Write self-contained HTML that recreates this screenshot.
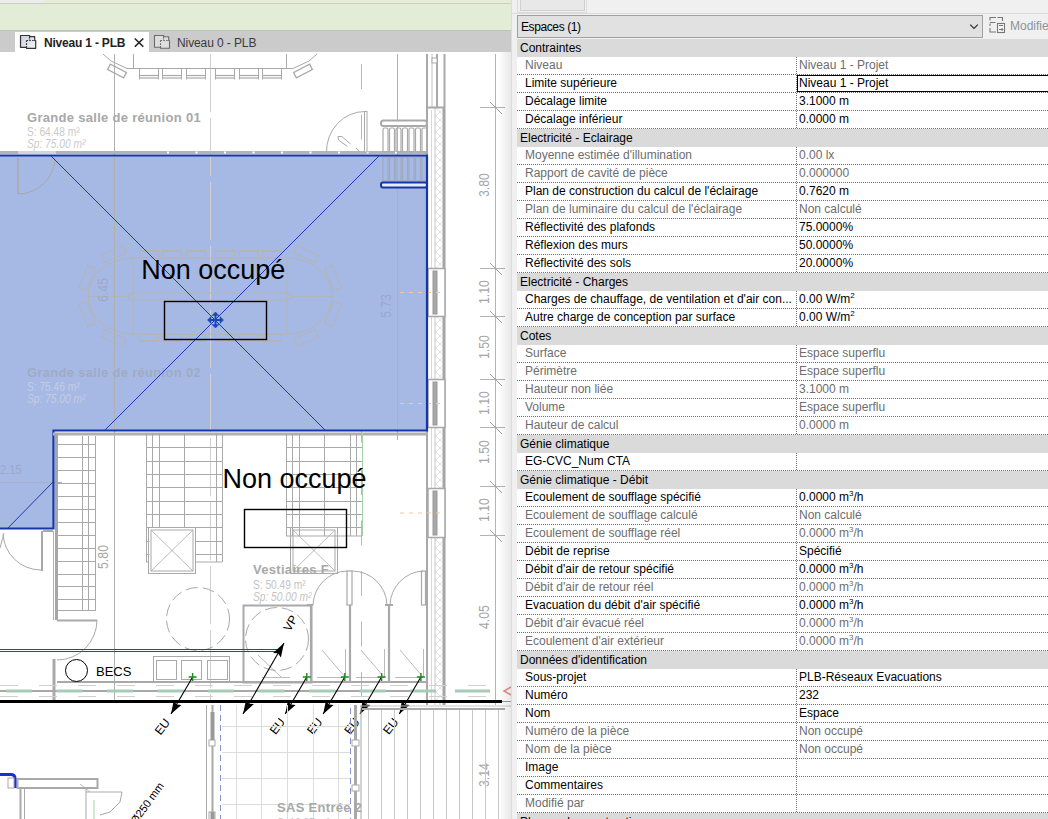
<!DOCTYPE html>
<html><head><meta charset="utf-8">
<style>
*{margin:0;padding:0;box-sizing:border-box}
html,body{width:1048px;height:819px;overflow:hidden;background:#fff;font-family:"Liberation Sans",sans-serif;font-size:12px;color:#000}
.abs{position:absolute}
#topw{left:0;top:0;width:511px;height:3px;background:linear-gradient(90deg,#ededed 0 40px,#e5edd8 46px)}
#green{left:0;top:3px;width:511px;height:27px;background:#e3ecd6;border-top:1px solid #c9cfc2}
#tabs{left:0;top:30px;width:511px;height:22px;background:#cbcbcb;border-top:1px solid #c0c0c0}
#tab1{left:15px;top:32px;width:134px;height:20px;background:#fff}
#canvas{left:0;top:52px;width:511px;height:767px;background:#fff;overflow:hidden}
#panel{left:511px;top:0;width:537px;height:819px;background:#f0f0f0;overflow:hidden}
.hd{position:absolute;left:6px;width:531px;height:18px;background:#dadada;padding-left:3px;line-height:19px;color:#000}
.rw{position:absolute;left:6px;width:531px;height:18px;background:#fff;line-height:16px}
.rw:after{content:"";position:absolute;left:0;right:0;top:17px;height:1px;background:repeating-linear-gradient(90deg,#707070 0 1px,transparent 1px 2px)}
.rw:before{content:"";position:absolute;left:279px;top:0;width:1px;height:17px;background:repeating-linear-gradient(180deg,#707070 0 1px,transparent 1px 2px)}
.k{position:absolute;left:8px;top:0;white-space:nowrap}
.v{position:absolute;left:282px;top:0;white-space:nowrap}
.g .k,.g .v{color:#6d6d6d}
.ed{left:280px;top:0;width:260px;height:17px;border-top:1px solid #000;border-bottom:1px solid #000;border-left:1px solid #000;padding-left:1px;line-height:15px}
sup{font-size:8px;vertical-align:top;line-height:8px;position:relative;top:1px}
</style></head><body>
<div id="topw" class="abs"></div>
<div id="green" class="abs"></div>
<div id="tabs" class="abs"></div>
<div id="tab1" class="abs"></div>
<svg class="abs" style="left:0;top:30px" width="511" height="22" viewBox="0 30 511 22">
<defs><linearGradient id="ig" x1="0" y1="0" x2="1" y2="1"><stop offset="0" stop-color="#c9cfdc"/><stop offset="1" stop-color="#f4f4f6"/></linearGradient></defs>
<path d="M20.5 35.5H29.7V36.7H34.7V40.5H35.7V48.3H26.5V47.3H20.5Z" fill="url(#ig)" stroke="#333" stroke-width="1.2" stroke-linejoin="round"/>
<path d="M26.5 40.5V47 M26.5 40.5H34 M29.5 36.8V40" stroke="#333" stroke-width="1.2" stroke-dasharray="1.6 1.2"/>
<path d="M134.8 38.5L143.3 46.8M143.3 38.5L134.8 46.8" stroke="#222" stroke-width="1.6"/>
<path d="M154.5 35.5H163.7V36.7H168.7V40.5H169.5V48.3H160.5V47.3H154.5Z" fill="#dedede" stroke="#6a6a6a" stroke-width="1.1" stroke-linejoin="round"/>
<path d="M160.5 40.5V47 M160.5 40.5H168 M163.5 36.8V40" stroke="#6a6a6a" stroke-width="1.1" stroke-dasharray="1.6 1.2"/>
</svg>
<div class="abs" style="left:44px;top:35px;font-weight:bold;font-size:12px;line-height:16px;color:#222;letter-spacing:-0.2px">Niveau 1 - PLB</div>
<div class="abs" style="left:177px;top:35px;font-size:12px;line-height:16px;color:#3a3a3a;letter-spacing:-0.1px">Niveau 0 - PLB</div>
<div id="canvas" class="abs">
<svg width="511" height="767" viewBox="0 52 511 767" style="position:absolute;left:0;top:0;font-family:'Liberation Sans',sans-serif">
<defs><pattern id="hatch" width="8" height="8" patternUnits="userSpaceOnUse"><path d="M0 0L8 8M8 0L0 8" stroke="#dadada" stroke-width="0.8"/></pattern></defs>
<path d="M0 155H427V430H53V528H0Z" fill="#a6b9e5"/>
<line x1="114.5" y1="54" x2="114.5" y2="700" stroke="#b0b0b0" stroke-width="1" />
<line x1="210.5" y1="54" x2="210.5" y2="700" stroke="#d0d0d4" stroke-width="1" stroke-dasharray="58 6"/>
<line x1="397.5" y1="54" x2="397.5" y2="440" stroke="#b0b0b0" stroke-width="1" />
<line x1="133.5" y1="54" x2="133.5" y2="68" stroke="#a9a9a9" stroke-width="1" />
<line x1="286.5" y1="54" x2="286.5" y2="68" stroke="#a9a9a9" stroke-width="1" />
<line x1="133" y1="68.5" x2="286" y2="68.5" stroke="#a9a9a9" stroke-width="1" />
<path d="M139.5 68.5V79.5M158.5 68.5V79.5" stroke="#a9a9a9" stroke-width="1" fill="none" />
<line x1="139" y1="75.5" x2="159" y2="75.5" stroke="#a9a9a9" stroke-width="1.2" />
<line x1="139" y1="78" x2="159" y2="78" stroke="#a9a9a9" stroke-width="1.2" />
<path d="M162.5 68.5V79.5M181.5 68.5V79.5" stroke="#a9a9a9" stroke-width="1" fill="none" />
<line x1="162" y1="75.5" x2="182" y2="75.5" stroke="#a9a9a9" stroke-width="1.2" />
<line x1="162" y1="78" x2="182" y2="78" stroke="#a9a9a9" stroke-width="1.2" />
<path d="M186.5 68.5V79.5M205.5 68.5V79.5" stroke="#a9a9a9" stroke-width="1" fill="none" />
<line x1="186" y1="75.5" x2="206" y2="75.5" stroke="#a9a9a9" stroke-width="1.2" />
<line x1="186" y1="78" x2="206" y2="78" stroke="#a9a9a9" stroke-width="1.2" />
<path d="M215.5 68.5V79.5M234.5 68.5V79.5" stroke="#a9a9a9" stroke-width="1" fill="none" />
<line x1="215" y1="75.5" x2="235" y2="75.5" stroke="#a9a9a9" stroke-width="1.2" />
<line x1="215" y1="78" x2="235" y2="78" stroke="#a9a9a9" stroke-width="1.2" />
<path d="M239.5 68.5V79.5M258.5 68.5V79.5" stroke="#a9a9a9" stroke-width="1" fill="none" />
<line x1="239" y1="75.5" x2="259" y2="75.5" stroke="#a9a9a9" stroke-width="1.2" />
<line x1="239" y1="78" x2="259" y2="78" stroke="#a9a9a9" stroke-width="1.2" />
<path d="M262.5 68.5V79.5M281.5 68.5V79.5" stroke="#a9a9a9" stroke-width="1" fill="none" />
<line x1="262" y1="75.5" x2="282" y2="75.5" stroke="#a9a9a9" stroke-width="1.2" />
<line x1="262" y1="78" x2="282" y2="78" stroke="#a9a9a9" stroke-width="1.2" />
<path d="M103 54L111 61L127 68.5H133" stroke="#a9a9a9" stroke-width="1" fill="none" />
<rect x="-9" y="-3" width="18" height="6" stroke="#a9a9a9" stroke-width="1.3" fill="none" transform="translate(117,71) rotate(27)"/>
<path d="M317 54L309 61L293 68.5H286" stroke="#a9a9a9" stroke-width="1" fill="none" />
<rect x="-9" y="-3" width="18" height="6" stroke="#a9a9a9" stroke-width="1.3" fill="none" transform="translate(303,71) rotate(-27)"/>
<text x="27" y="121.5" font-size="13" fill="#a8a8a8" font-weight="bold" letter-spacing="0.3" text-anchor="start">Grande salle de réunion 01</text>
<text x="27" y="136" font-size="12" fill="#cacaca" transform="translate(27,136) scale(0.85,1) translate(-27,-136)" text-anchor="start">S: 64.48 m²</text>
<text x="27" y="148.5" font-size="12" fill="#cacaca" font-style="italic" transform="translate(27,148.5) scale(0.85,1) translate(-27,-148.5)" text-anchor="start">Sp: 75.00 m²</text>
<line x1="0" y1="152.5" x2="18" y2="152.5" stroke="#b4b4b4" stroke-width="3" />
<line x1="18" y1="152.5" x2="56" y2="152.5" stroke="#d4d4d4" stroke-width="3" />
<line x1="56" y1="152.5" x2="427" y2="152.5" stroke="#b4b4b4" stroke-width="3" />
<rect x="167.0" y="151.5" width="2" height="2" stroke="none" stroke-width="0" fill="#fff" />
<rect x="195.5" y="151.5" width="2" height="2" stroke="none" stroke-width="0" fill="#fff" />
<rect x="224.0" y="151.5" width="2" height="2" stroke="none" stroke-width="0" fill="#fff" />
<rect x="252.5" y="151.5" width="2" height="2" stroke="none" stroke-width="0" fill="#fff" />
<rect x="281.0" y="151.5" width="2" height="2" stroke="none" stroke-width="0" fill="#fff" />
<rect x="309.5" y="151.5" width="2" height="2" stroke="none" stroke-width="0" fill="#fff" />
<rect x="338.0" y="151.5" width="2" height="2" stroke="none" stroke-width="0" fill="#fff" />
<rect x="366.5" y="151.5" width="2" height="2" stroke="none" stroke-width="0" fill="#fff" />
<rect x="395.0" y="151.5" width="2" height="2" stroke="none" stroke-width="0" fill="#fff" />
<line x1="18" y1="158" x2="18" y2="194" stroke="#a9a9a9" stroke-width="1.5" />
<path d="M18 194A37 37 0 0 0 55 158" stroke="#a9a9a9" stroke-width="1" fill="none" />
<path d="M326.5 152 A38.5 40 0 0 1 365 111.5" stroke="#a9a9a9" stroke-width="1" fill="none" />
<rect x="364.5" y="111.5" width="2.5" height="40.5" stroke="#a9a9a9" stroke-width="1" fill="#fff" />
<path d="M338 136.5L342 136.5L350.5 144 M338 136.5L338.5 140L347.5 146.5 M356 148L360 152" stroke="#a9a9a9" stroke-width="1" fill="none" />
<line x1="361.5" y1="64" x2="361.5" y2="445" stroke="#9ccc9c" stroke-width="1" stroke-dasharray="25 25.5"/>
<line x1="361.5" y1="470" x2="361.5" y2="700" stroke="#9ccc9c" stroke-width="1" stroke-dasharray="25 25.5"/>
<rect x="381" y="120.5" width="46" height="5.5" stroke="#a9a9a9" stroke-width="2" fill="#fff" rx="2.5"/>
<rect x="383" y="128" width="5" height="24" stroke="#a9a9a9" stroke-width="1.2" fill="none" rx="1.5"/>
<rect x="389.5" y="128" width="5" height="24" stroke="#a9a9a9" stroke-width="1.2" fill="none" rx="1.5"/>
<rect x="396" y="128" width="5" height="24" stroke="#a9a9a9" stroke-width="1.2" fill="none" rx="1.5"/>
<rect x="402.5" y="128" width="5" height="24" stroke="#a9a9a9" stroke-width="1.2" fill="none" rx="1.5"/>
<rect x="409" y="128" width="5" height="24" stroke="#a9a9a9" stroke-width="1.2" fill="none" rx="1.5"/>
<rect x="415.5" y="128" width="5" height="24" stroke="#a9a9a9" stroke-width="1.2" fill="none" rx="1.5"/>
<rect x="422" y="128" width="5" height="24" stroke="#a9a9a9" stroke-width="1.2" fill="none" rx="1.5"/>
<rect x="383" y="157" width="5" height="24" stroke="#a0a8c0" stroke-width="1.2" fill="none" />
<rect x="389.5" y="157" width="5" height="24" stroke="#a0a8c0" stroke-width="1.2" fill="none" />
<rect x="396" y="157" width="5" height="24" stroke="#a0a8c0" stroke-width="1.2" fill="none" />
<rect x="402.5" y="157" width="5" height="24" stroke="#a0a8c0" stroke-width="1.2" fill="none" />
<rect x="409" y="157" width="5" height="24" stroke="#a0a8c0" stroke-width="1.2" fill="none" />
<rect x="415.5" y="157" width="5" height="24" stroke="#a0a8c0" stroke-width="1.2" fill="none" />
<rect x="422" y="157" width="5" height="24" stroke="#a0a8c0" stroke-width="1.2" fill="none" />
<rect x="381" y="182.5" width="46" height="5" stroke="#1436a8" stroke-width="2" fill="#e8ecf4" rx="2"/>
<line x1="427" y1="54" x2="427" y2="107" stroke="#a9a9a9" stroke-width="2" />
<line x1="432" y1="54" x2="432" y2="107" stroke="#c0c0c0" stroke-width="1" />
<line x1="437" y1="54" x2="437" y2="107" stroke="#a9a9a9" stroke-width="2" />
<line x1="444.5" y1="54" x2="444.5" y2="107" stroke="#a9a9a9" stroke-width="2" />
<rect x="432" y="58" width="5" height="5" stroke="#a9a9a9" stroke-width="1" fill="#fff" />
<line x1="427" y1="107" x2="427" y2="705" stroke="#a9a9a9" stroke-width="2" />
<line x1="444" y1="107" x2="444" y2="705" stroke="#a4a4a4" stroke-width="3" />
<rect x="435" y="107" width="7.5" height="598" fill="url(#hatch)"/>
<line x1="435" y1="107" x2="435" y2="705" stroke="#c8c8c8" stroke-width="1" />
<line x1="431.5" y1="110" x2="431.5" y2="700" stroke="#d8d8d8" stroke-width="1" />
<line x1="427" y1="107.5" x2="445" y2="107.5" stroke="#a9a9a9" stroke-width="2" />
<rect x="428" y="268.5" width="17" height="48" stroke="#a8a8a8" stroke-width="1.5" fill="#fff" />
<rect x="433" y="271" width="4" height="43" stroke="#999" stroke-width="1" fill="#a8a8a8" />
<line x1="400" y1="292.5" x2="445" y2="292.5" stroke="#f0c8a0" stroke-width="1" stroke-dasharray="4 5"/>
<rect x="428" y="379.5" width="17" height="48" stroke="#a8a8a8" stroke-width="1.5" fill="#fff" />
<rect x="433" y="382" width="4" height="43" stroke="#999" stroke-width="1" fill="#a8a8a8" />
<line x1="400" y1="403.5" x2="445" y2="403.5" stroke="#f0c8a0" stroke-width="1" stroke-dasharray="4 5"/>
<rect x="428" y="488.5" width="17" height="49" stroke="#a8a8a8" stroke-width="1.5" fill="#fff" />
<rect x="433" y="491" width="4" height="44" stroke="#999" stroke-width="1" fill="#a8a8a8" />
<line x1="400" y1="513.0" x2="445" y2="513.0" stroke="#f0c8a0" stroke-width="1" stroke-dasharray="4 5"/>
<line x1="495.5" y1="54" x2="495.5" y2="705" stroke="#b4b4b4" stroke-width="1" />
<line x1="480" y1="107.5" x2="505" y2="107.5" stroke="#b4b4b4" stroke-width="1" />
<line x1="490" y1="102" x2="502" y2="114" stroke="#a0a0a0" stroke-width="1" />
<line x1="480" y1="268.5" x2="505" y2="268.5" stroke="#b4b4b4" stroke-width="1" />
<line x1="490" y1="263" x2="502" y2="275" stroke="#a0a0a0" stroke-width="1" />
<line x1="480" y1="316.5" x2="505" y2="316.5" stroke="#b4b4b4" stroke-width="1" />
<line x1="490" y1="311" x2="502" y2="323" stroke="#a0a0a0" stroke-width="1" />
<line x1="480" y1="379.5" x2="505" y2="379.5" stroke="#b4b4b4" stroke-width="1" />
<line x1="490" y1="374" x2="502" y2="386" stroke="#a0a0a0" stroke-width="1" />
<line x1="480" y1="427.5" x2="505" y2="427.5" stroke="#b4b4b4" stroke-width="1" />
<line x1="490" y1="422" x2="502" y2="434" stroke="#a0a0a0" stroke-width="1" />
<line x1="480" y1="486.5" x2="505" y2="486.5" stroke="#b4b4b4" stroke-width="1" />
<line x1="490" y1="481" x2="502" y2="493" stroke="#a0a0a0" stroke-width="1" />
<line x1="480" y1="535.5" x2="505" y2="535.5" stroke="#b4b4b4" stroke-width="1" />
<line x1="490" y1="530" x2="502" y2="542" stroke="#a0a0a0" stroke-width="1" />
<text x="489" y="185" font-size="14" fill="#a4a4a4" transform="rotate(-90 489 185) translate(489,0) scale(0.88,1) translate(-489,0)" text-anchor="middle">3.80</text>
<text x="489" y="292" font-size="14" fill="#a4a4a4" transform="rotate(-90 489 292) translate(489,0) scale(0.88,1) translate(-489,0)" text-anchor="middle">1.10</text>
<text x="489" y="347" font-size="14" fill="#a4a4a4" transform="rotate(-90 489 347) translate(489,0) scale(0.88,1) translate(-489,0)" text-anchor="middle">1.50</text>
<text x="489" y="403" font-size="14" fill="#a4a4a4" transform="rotate(-90 489 403) translate(489,0) scale(0.88,1) translate(-489,0)" text-anchor="middle">1.10</text>
<text x="489" y="452" font-size="14" fill="#a4a4a4" transform="rotate(-90 489 452) translate(489,0) scale(0.88,1) translate(-489,0)" text-anchor="middle">1.50</text>
<text x="489" y="510" font-size="14" fill="#a4a4a4" transform="rotate(-90 489 510) translate(489,0) scale(0.88,1) translate(-489,0)" text-anchor="middle">1.10</text>
<text x="489" y="617" font-size="14" fill="#a4a4a4" transform="rotate(-90 489 617) translate(489,0) scale(0.88,1) translate(-489,0)" text-anchor="middle">4.05</text>
<text x="489" y="775" font-size="14" fill="#a4a4a4" transform="rotate(-90 489 775) translate(489,0) scale(0.88,1) translate(-489,0)" text-anchor="middle">3.14</text>
<path d="M133 258H287 A45 38 0 0 1 287 334 H133 A45 38 0 0 1 133 258Z" stroke="#b4b4b4" stroke-width="1" fill="none" />
<path d="M133 258V334 M287 258V334" stroke="#b4b4b4" stroke-width="1" fill="none" />
<path d="M132 293H288 A3.5 3.5 0 0 1 288 300 H132 A3.5 3.5 0 0 1 132 293Z" stroke="#b4b4b4" stroke-width="1" fill="none" />
<line x1="88" y1="296.5" x2="129" y2="296.5" stroke="#b4b4b4" stroke-width="1" />
<line x1="291" y1="296.5" x2="332" y2="296.5" stroke="#b4b4b4" stroke-width="1" />
<rect x="139.5" y="250.5" width="19" height="7" stroke="#b4b4b4" stroke-width="1" fill="none" />
<line x1="139" y1="251" x2="159" y2="251" stroke="#b4b4b4" stroke-width="2" />
<rect x="139.5" y="334.5" width="19" height="7" stroke="#b4b4b4" stroke-width="1" fill="none" />
<line x1="139" y1="341" x2="159" y2="341" stroke="#b4b4b4" stroke-width="2" />
<rect x="162.5" y="250.5" width="19" height="7" stroke="#b4b4b4" stroke-width="1" fill="none" />
<line x1="162" y1="251" x2="182" y2="251" stroke="#b4b4b4" stroke-width="2" />
<rect x="162.5" y="334.5" width="19" height="7" stroke="#b4b4b4" stroke-width="1" fill="none" />
<line x1="162" y1="341" x2="182" y2="341" stroke="#b4b4b4" stroke-width="2" />
<rect x="186.5" y="250.5" width="19" height="7" stroke="#b4b4b4" stroke-width="1" fill="none" />
<line x1="186" y1="251" x2="206" y2="251" stroke="#b4b4b4" stroke-width="2" />
<rect x="186.5" y="334.5" width="19" height="7" stroke="#b4b4b4" stroke-width="1" fill="none" />
<line x1="186" y1="341" x2="206" y2="341" stroke="#b4b4b4" stroke-width="2" />
<rect x="215.5" y="250.5" width="19" height="7" stroke="#b4b4b4" stroke-width="1" fill="none" />
<line x1="215" y1="251" x2="235" y2="251" stroke="#b4b4b4" stroke-width="2" />
<rect x="215.5" y="334.5" width="19" height="7" stroke="#b4b4b4" stroke-width="1" fill="none" />
<line x1="215" y1="341" x2="235" y2="341" stroke="#b4b4b4" stroke-width="2" />
<rect x="239.5" y="250.5" width="19" height="7" stroke="#b4b4b4" stroke-width="1" fill="none" />
<line x1="239" y1="251" x2="259" y2="251" stroke="#b4b4b4" stroke-width="2" />
<rect x="239.5" y="334.5" width="19" height="7" stroke="#b4b4b4" stroke-width="1" fill="none" />
<line x1="239" y1="341" x2="259" y2="341" stroke="#b4b4b4" stroke-width="2" />
<rect x="262.5" y="250.5" width="19" height="7" stroke="#b4b4b4" stroke-width="1" fill="none" />
<line x1="262" y1="251" x2="282" y2="251" stroke="#b4b4b4" stroke-width="2" />
<rect x="262.5" y="334.5" width="19" height="7" stroke="#b4b4b4" stroke-width="1" fill="none" />
<line x1="262" y1="341" x2="282" y2="341" stroke="#b4b4b4" stroke-width="2" />
<rect x="-12" y="-4" width="24" height="8" stroke="#b4b4b4" stroke-width="1" fill="none" transform="translate(114,254) rotate(-25)"/>
<rect x="-12" y="-4" width="24" height="8" stroke="#b4b4b4" stroke-width="1" fill="none" transform="translate(87,278) rotate(-68)"/>
<rect x="-12" y="-4" width="24" height="8" stroke="#b4b4b4" stroke-width="1" fill="none" transform="translate(87,314) rotate(68)"/>
<rect x="-12" y="-4" width="24" height="8" stroke="#b4b4b4" stroke-width="1" fill="none" transform="translate(114,338) rotate(25)"/>
<rect x="-12" y="-4" width="24" height="8" stroke="#b4b4b4" stroke-width="1" fill="none" transform="translate(306,254) rotate(25)"/>
<rect x="-12" y="-4" width="24" height="8" stroke="#b4b4b4" stroke-width="1" fill="none" transform="translate(333,278) rotate(68)"/>
<rect x="-12" y="-4" width="24" height="8" stroke="#b4b4b4" stroke-width="1" fill="none" transform="translate(333,314) rotate(-68)"/>
<rect x="-12" y="-4" width="24" height="8" stroke="#b4b4b4" stroke-width="1" fill="none" transform="translate(306,338) rotate(-25)"/>
<text x="108" y="290" font-size="14" fill="#a0a8c4" transform="rotate(-90 108 290) translate(108,0) scale(0.88,1) translate(-108,0)" text-anchor="middle">6.45</text>
<text x="391" y="306" font-size="14" fill="#9aa8cc" transform="rotate(-90 391 306) translate(391,0) scale(0.88,1) translate(-391,0)" text-anchor="middle">5.73</text>
<text x="27" y="376.5" font-size="13" fill="#a0aac4" font-weight="bold" letter-spacing="0.3" text-anchor="start">Grande salle de réunion 02</text>
<text x="27" y="391" font-size="12" fill="#c4cce4" transform="translate(27,391) scale(0.85,1) translate(-27,-391)" text-anchor="start">S: 75.46 m²</text>
<text x="27" y="403.5" font-size="12" fill="#c4cce4" font-style="italic" transform="translate(27,403.5) scale(0.85,1) translate(-27,-403.5)" text-anchor="start">Sp: 75.00 m²</text>
<text x="0" y="474" font-size="13" fill="#9aa8c8" transform="translate(0,474) scale(0.85,1) translate(0,-474)" text-anchor="start">2.15</text>
<line x1="0" y1="482.5" x2="62" y2="482.5" stroke="#a8b0c8" stroke-width="1" />
<line x1="50" y1="155" x2="325" y2="430" stroke="#1a3ab0" stroke-width="1" />
<line x1="105" y1="430" x2="380" y2="155" stroke="#1a3ab0" stroke-width="1" />
<line x1="53" y1="482" x2="8" y2="528" stroke="#1a3ab0" stroke-width="1" />
<path d="M0 155.5H427V430.5H53.5V528.5H0" stroke="#1436a8" stroke-width="2.2" fill="none" />
<text x="141.2" y="278.7" font-size="27" fill="#000"  text-anchor="start">Non occupé</text>
<rect x="164.5" y="301.5" width="102" height="38" stroke="#000" stroke-width="1.4" fill="none" />
<g transform="translate(215.5,320)" fill="#1a48b8" stroke="#1a48b8"><path d="M-6 0H6M0 -6V6" stroke-width="2"/><path d="M-8 0l3.5-3.5v7z M8 0l-3.5-3.5v7z M0 -8l-3.5 3.5h7z M0 8l-3.5-3.5h7z" stroke-width="0.5"/></g>
<line x1="53" y1="434" x2="427" y2="434" stroke="#b0b0b0" stroke-width="3" />
<line x1="56.5" y1="433" x2="56.5" y2="620" stroke="#a6a6a6" stroke-width="3" />
<line x1="53.5" y1="531" x2="53.5" y2="620" stroke="#b0b0b0" stroke-width="1" />
<line x1="43" y1="531" x2="53" y2="531" stroke="#a9a9a9" stroke-width="2" />
<line x1="42" y1="531" x2="42" y2="571" stroke="#a9a9a9" stroke-width="2" />
<path d="M41 570A38 38 0 0 1 3 534" stroke="#a9a9a9" stroke-width="1" fill="none" />
<line x1="4" y1="533" x2="0" y2="548" stroke="#a9a9a9" stroke-width="1" />
<line x1="57" y1="444.5" x2="96" y2="444.5" stroke="#a9a9a9" stroke-width="1" />
<line x1="57" y1="457.5" x2="96" y2="457.5" stroke="#a9a9a9" stroke-width="1" />
<line x1="57" y1="470.5" x2="96" y2="470.5" stroke="#a9a9a9" stroke-width="1" />
<line x1="57" y1="483.5" x2="96" y2="483.5" stroke="#a9a9a9" stroke-width="1" />
<line x1="57" y1="496.5" x2="96" y2="496.5" stroke="#a9a9a9" stroke-width="1" />
<line x1="57" y1="509.5" x2="96" y2="509.5" stroke="#a9a9a9" stroke-width="1" />
<line x1="57" y1="522.5" x2="96" y2="522.5" stroke="#a9a9a9" stroke-width="1" />
<line x1="57" y1="535.5" x2="96" y2="535.5" stroke="#a9a9a9" stroke-width="1" />
<line x1="57" y1="548.5" x2="96" y2="548.5" stroke="#a9a9a9" stroke-width="1" />
<line x1="57" y1="561.5" x2="96" y2="561.5" stroke="#a9a9a9" stroke-width="1" />
<line x1="57" y1="574.5" x2="96" y2="574.5" stroke="#a9a9a9" stroke-width="1" />
<line x1="57" y1="586.5" x2="96" y2="586.5" stroke="#a9a9a9" stroke-width="1" />
<line x1="57" y1="599.5" x2="96" y2="599.5" stroke="#a9a9a9" stroke-width="1" />
<line x1="57" y1="610.5" x2="96" y2="610.5" stroke="#a9a9a9" stroke-width="1" />
<line x1="82.5" y1="436" x2="82.5" y2="611" stroke="#a9a9a9" stroke-width="1" />
<line x1="88.5" y1="436" x2="88.5" y2="611" stroke="#a9a9a9" stroke-width="1" />
<line x1="95.5" y1="436" x2="95.5" y2="611" stroke="#a9a9a9" stroke-width="1" />
<line x1="57" y1="620.5" x2="97" y2="620.5" stroke="#a9a9a9" stroke-width="2" />
<path d="M97 620A40 40 0 0 1 57 660" stroke="#a9a9a9" stroke-width="1" fill="none" />
<line x1="54" y1="659" x2="54" y2="700" stroke="#a9a9a9" stroke-width="3" />
<text x="108" y="557" font-size="14" fill="#a4a4a4" transform="rotate(-90 108 557) translate(108,0) scale(0.88,1) translate(-108,0)" text-anchor="middle">5.80</text>
<line x1="146" y1="447.5" x2="222" y2="447.5" stroke="#a9a9a9" stroke-width="1" />
<line x1="146" y1="461.5" x2="222" y2="461.5" stroke="#a9a9a9" stroke-width="1" />
<line x1="146" y1="474.5" x2="222" y2="474.5" stroke="#a9a9a9" stroke-width="1" />
<line x1="146" y1="487.5" x2="222" y2="487.5" stroke="#a9a9a9" stroke-width="1" />
<line x1="146" y1="501.5" x2="222" y2="501.5" stroke="#a9a9a9" stroke-width="1" />
<line x1="146" y1="514.5" x2="222" y2="514.5" stroke="#a9a9a9" stroke-width="1" />
<line x1="146" y1="527.5" x2="222" y2="527.5" stroke="#a9a9a9" stroke-width="1" />
<line x1="146" y1="541.5" x2="222" y2="541.5" stroke="#a9a9a9" stroke-width="1" />
<line x1="146" y1="554.5" x2="222" y2="554.5" stroke="#a9a9a9" stroke-width="1" />
<line x1="146.5" y1="433" x2="146.5" y2="562" stroke="#a9a9a9" stroke-width="1" />
<line x1="152.5" y1="433" x2="152.5" y2="562" stroke="#a9a9a9" stroke-width="1" />
<line x1="159.5" y1="433" x2="159.5" y2="562" stroke="#a9a9a9" stroke-width="1" />
<line x1="184.5" y1="433" x2="184.5" y2="562" stroke="#a9a9a9" stroke-width="1" />
<line x1="216.5" y1="433" x2="216.5" y2="562" stroke="#a9a9a9" stroke-width="1" />
<line x1="222.5" y1="433" x2="222.5" y2="562" stroke="#a9a9a9" stroke-width="1" />
<line x1="146" y1="562" x2="222" y2="562" stroke="#a9a9a9" stroke-width="1" />
<rect x="148.5" y="527.5" width="47" height="46" stroke="#a9a9a9" stroke-width="1" fill="#fff" />
<rect x="151" y="530" width="42" height="41" stroke="#a9a9a9" stroke-width="1" fill="none" />
<line x1="151.5" y1="530.5" x2="192.5" y2="570.5" stroke="#a9a9a9" stroke-width="0.8" />
<line x1="192.5" y1="530.5" x2="151.5" y2="570.5" stroke="#a9a9a9" stroke-width="0.8" />
<rect x="290.5" y="527.5" width="47" height="46" stroke="#a9a9a9" stroke-width="1" fill="#fff" />
<rect x="293" y="530" width="42" height="41" stroke="#a9a9a9" stroke-width="1" fill="none" />
<line x1="293.5" y1="530.5" x2="334.5" y2="570.5" stroke="#a9a9a9" stroke-width="0.8" />
<line x1="334.5" y1="530.5" x2="293.5" y2="570.5" stroke="#a9a9a9" stroke-width="0.8" />
<line x1="286" y1="447.5" x2="362" y2="447.5" stroke="#a9a9a9" stroke-width="1" />
<line x1="286" y1="461.5" x2="362" y2="461.5" stroke="#a9a9a9" stroke-width="1" />
<line x1="286" y1="474.5" x2="362" y2="474.5" stroke="#a9a9a9" stroke-width="1" />
<line x1="286" y1="487.5" x2="362" y2="487.5" stroke="#a9a9a9" stroke-width="1" />
<line x1="286" y1="501.5" x2="362" y2="501.5" stroke="#a9a9a9" stroke-width="1" />
<line x1="286" y1="514.5" x2="362" y2="514.5" stroke="#a9a9a9" stroke-width="1" />
<line x1="286" y1="527.5" x2="362" y2="527.5" stroke="#a9a9a9" stroke-width="1" />
<line x1="286.5" y1="433" x2="286.5" y2="536" stroke="#a9a9a9" stroke-width="1" />
<line x1="292.5" y1="433" x2="292.5" y2="536" stroke="#a9a9a9" stroke-width="1" />
<line x1="299.5" y1="433" x2="299.5" y2="536" stroke="#a9a9a9" stroke-width="1" />
<line x1="324.5" y1="433" x2="324.5" y2="536" stroke="#a9a9a9" stroke-width="1" />
<line x1="350.5" y1="433" x2="350.5" y2="536" stroke="#a9a9a9" stroke-width="1" />
<line x1="356.5" y1="433" x2="356.5" y2="536" stroke="#a9a9a9" stroke-width="1" />
<line x1="362.5" y1="433" x2="362.5" y2="536" stroke="#a8d0a8" stroke-width="1" />
<line x1="286" y1="536" x2="362" y2="536" stroke="#a9a9a9" stroke-width="1" />
<text x="222.5" y="487.5" font-size="27" fill="#000"  text-anchor="start">Non occupé</text>
<rect x="244.5" y="509.5" width="102" height="38" stroke="#000" stroke-width="1.4" fill="none" />
<text x="253" y="574" font-size="13" fill="#a8a8a8" font-weight="bold" letter-spacing="0.3" text-anchor="start">Vestiaires F</text>
<text x="253" y="589" font-size="12" fill="#c4c4c4" transform="translate(253,589) scale(0.85,1) translate(-253,-589)" text-anchor="start">S: 50.49 m²</text>
<text x="253" y="601.5" font-size="12" fill="#c4c4c4" font-style="italic" transform="translate(253,601.5) scale(0.85,1) translate(-253,-601.5)" text-anchor="start">Sp: 50.00 m²</text>
<circle cx="198" cy="619" r="31.5" fill="none" stroke="#a9a9a9" stroke-dasharray="12 5"/>
<circle cx="277" cy="639" r="31.5" fill="none" stroke="#a9a9a9" stroke-dasharray="12 5"/>
<rect x="243.5" y="605.5" width="68" height="77" stroke="#a9a9a9" stroke-width="2" fill="none" />
<line x1="311" y1="605" x2="311" y2="683" stroke="#a9a9a9" stroke-width="2.2" />
<line x1="350" y1="605" x2="350" y2="683" stroke="#a9a9a9" stroke-width="2.2" />
<line x1="389" y1="605" x2="389" y2="683" stroke="#a9a9a9" stroke-width="2.2" />
<rect x="347" y="571" width="5" height="34" stroke="#a9a9a9" stroke-width="1.2" fill="none" />
<rect x="421.5" y="571" width="4" height="34" stroke="#a9a9a9" stroke-width="1.2" fill="none" />
<path d="M313 605A35 35 0 0 1 347 571" stroke="#a9a9a9" stroke-width="1" fill="none" />
<path d="M352 571A35 35 0 0 1 387 605" stroke="#a9a9a9" stroke-width="1" fill="none" />
<path d="M390 605A35 35 0 0 1 423 571" stroke="#a9a9a9" stroke-width="1" fill="none" />
<line x1="307" y1="605" x2="313" y2="605" stroke="#a9a9a9" stroke-width="2" />
<line x1="385" y1="605" x2="393" y2="605" stroke="#a9a9a9" stroke-width="2" />
<line x1="322" y1="650" x2="345" y2="677" stroke="#a9a9a9" stroke-width="0.8" />
<line x1="345.5" y1="649" x2="345.5" y2="677" stroke="#a9a9a9" stroke-width="0.8" />
<line x1="317" y1="677.5" x2="345" y2="677.5" stroke="#a9a9a9" stroke-width="0.8" />
<line x1="361" y1="650" x2="384" y2="677" stroke="#a9a9a9" stroke-width="0.8" />
<line x1="384.5" y1="649" x2="384.5" y2="677" stroke="#a9a9a9" stroke-width="0.8" />
<line x1="356" y1="677.5" x2="384" y2="677.5" stroke="#a9a9a9" stroke-width="0.8" />
<line x1="400" y1="650" x2="423" y2="677" stroke="#a9a9a9" stroke-width="0.8" />
<line x1="423.5" y1="649" x2="423.5" y2="677" stroke="#a9a9a9" stroke-width="0.8" />
<line x1="395" y1="677.5" x2="423" y2="677.5" stroke="#a9a9a9" stroke-width="0.8" />
<line x1="258" y1="655" x2="281" y2="677" stroke="#a9a9a9" stroke-width="0.8" />
<line x1="262" y1="677.5" x2="290" y2="677.5" stroke="#a9a9a9" stroke-width="0.8" />
<line x1="57" y1="682" x2="427" y2="682" stroke="#a9a9a9" stroke-width="2" />
<line x1="0" y1="685.5" x2="505" y2="685.5" stroke="#d0d0d0" stroke-width="1" stroke-dasharray="18 21"/>
<line x1="0" y1="691" x2="427" y2="691" stroke="#a8a8a8" stroke-width="2" />
<line x1="6.0" y1="691" x2="32.0" y2="691" stroke="#a8cbb8" stroke-width="3" />
<line x1="56.5" y1="691" x2="82.5" y2="691" stroke="#a8cbb8" stroke-width="3" />
<line x1="107.0" y1="691" x2="133.0" y2="691" stroke="#a8cbb8" stroke-width="3" />
<line x1="157.5" y1="691" x2="183.5" y2="691" stroke="#a8cbb8" stroke-width="3" />
<line x1="208.0" y1="691" x2="234.0" y2="691" stroke="#a8cbb8" stroke-width="3" />
<line x1="258.5" y1="691" x2="284.5" y2="691" stroke="#a8cbb8" stroke-width="3" />
<line x1="309.0" y1="691" x2="335.0" y2="691" stroke="#a8cbb8" stroke-width="3" />
<line x1="359.5" y1="691" x2="385.5" y2="691" stroke="#a8cbb8" stroke-width="3" />
<line x1="410.0" y1="691" x2="436.0" y2="691" stroke="#a8cbb8" stroke-width="3" />
<line x1="455" y1="691" x2="490" y2="691" stroke="#a8cbb8" stroke-width="3" />
<line x1="0" y1="696.5" x2="505" y2="696.5" stroke="#d0d0d0" stroke-width="1" stroke-dasharray="18 21"/>
<line x1="0" y1="649.5" x2="280" y2="649.5" stroke="#2a3cc0" stroke-width="1" />
<line x1="0" y1="651.5" x2="280" y2="651.5" stroke="#2a3cc0" stroke-width="1" />
<rect x="153.5" y="656.5" width="76" height="25" stroke="#a9a9a9" stroke-width="1" fill="none" />
<rect x="156.5" y="660.5" width="20" height="19" stroke="#a9a9a9" stroke-width="1" fill="none" />
<rect x="181.5" y="660.5" width="20" height="19" stroke="#a9a9a9" stroke-width="1" fill="none" />
<rect x="207.5" y="660.5" width="20" height="19" stroke="#a9a9a9" stroke-width="1" fill="none" />
<circle cx="76.5" cy="670.5" r="11" fill="none" stroke="#000" stroke-width="1"/>
<text x="96" y="676" font-size="13" fill="#000"  text-anchor="start">BECS</text>
<line x1="0" y1="701.5" x2="502" y2="701.5" stroke="#000" stroke-width="3.2" />
<line x1="502" y1="701.5" x2="511" y2="701.5" stroke="#999" stroke-width="1" />
<line x1="192.6" y1="677" x2="171.0" y2="714" stroke="#000" stroke-width="1.1" />
<path d="M171.0 714.0L173.7 700.5L176.6 704.5L181.4 705.0Z" fill="#000"/>
<path d="M188.6 677h8M192.6 673v8" stroke="#1a8a1a" stroke-width="1.4"/>
<line x1="306.8" y1="677" x2="285.2" y2="714" stroke="#000" stroke-width="1.1" />
<path d="M285.2 714.0L287.9 700.5L290.8 704.5L295.6 705.0Z" fill="#000"/>
<path d="M302.8 677h8M306.8 673v8" stroke="#1a8a1a" stroke-width="1.4"/>
<line x1="344.8" y1="677" x2="323.2" y2="714" stroke="#000" stroke-width="1.1" />
<path d="M323.2 714.0L325.9 700.5L328.8 704.5L333.6 705.0Z" fill="#000"/>
<path d="M340.8 677h8M344.8 673v8" stroke="#1a8a1a" stroke-width="1.4"/>
<line x1="381.6" y1="677" x2="360.0" y2="714" stroke="#000" stroke-width="1.1" />
<path d="M360.0 714.0L362.7 700.5L365.6 704.5L370.4 705.0Z" fill="#000"/>
<path d="M377.6 677h8M381.6 673v8" stroke="#1a8a1a" stroke-width="1.4"/>
<line x1="420.9" y1="677" x2="399.29999999999995" y2="714" stroke="#000" stroke-width="1.1" />
<path d="M399.3 714.0L402.0 700.5L404.9 704.5L409.7 705.0Z" fill="#000"/>
<path d="M416.9 677h8M420.9 673v8" stroke="#1a8a1a" stroke-width="1.4"/>
<line x1="243" y1="714" x2="284" y2="643" stroke="#000" stroke-width="1.1" />
<path d="M243.0 714.0L246.1 699.6L249.0 703.7L253.9 704.1Z" fill="#000"/>
<path d="M284.0 643.0L280.9 657.4L278.0 653.3L273.1 652.9Z" fill="#000"/>
<text x="162" y="726.4" font-size="12" fill="#000" transform="rotate(-52 162 726.4) translate(0 4.5)" text-anchor="middle">EU</text>
<text x="277" y="726" font-size="12" fill="#000" transform="rotate(-52 277 726) translate(0 4.5)" text-anchor="middle">EU</text>
<text x="314.3" y="726" font-size="12" fill="#000" transform="rotate(-52 314.3 726) translate(0 4.5)" text-anchor="middle">EU</text>
<text x="351.7" y="726" font-size="12" fill="#000" transform="rotate(-52 351.7 726) translate(0 4.5)" text-anchor="middle">EU</text>
<text x="390.4" y="726" font-size="12" fill="#000" transform="rotate(-52 390.4 726) translate(0 4.5)" text-anchor="middle">EU</text>
<text x="290" y="623" font-size="12" fill="#000" transform="rotate(-60 290 623) translate(0 4.5)" text-anchor="middle">VP</text>
<line x1="206.5" y1="705" x2="206.5" y2="819" stroke="#a9a9a9" stroke-width="1" />
<line x1="212.5" y1="705" x2="212.5" y2="819" stroke="#a9a9a9" stroke-width="2" />
<rect x="209" y="740" width="6" height="6" stroke="#a9a9a9" stroke-width="1" fill="#fff" />
<rect x="209" y="812" width="6" height="8" stroke="#a9a9a9" stroke-width="1" fill="#fff" />
<line x1="212.5" y1="712" x2="212.5" y2="740" stroke="#999" stroke-width="4" />
<line x1="212.5" y1="812" x2="212.5" y2="819" stroke="#999" stroke-width="4" />
<line x1="355.5" y1="705" x2="355.5" y2="819" stroke="#a9a9a9" stroke-width="3" />
<line x1="361" y1="705" x2="361" y2="819" stroke="#a9a9a9" stroke-width="1" />
<rect x="352" y="740" width="7" height="6" stroke="#a9a9a9" stroke-width="1" fill="#fff" />
<rect x="352" y="785" width="7" height="6" stroke="#a9a9a9" stroke-width="1" fill="#fff" />
<line x1="220.5" y1="705" x2="220.5" y2="819" stroke="#9090d0" stroke-width="1" stroke-dasharray="6 4"/>
<line x1="350.5" y1="708" x2="350.5" y2="819" stroke="#9090d0" stroke-width="1" stroke-dasharray="6 4"/>
<line x1="236.5" y1="705" x2="236.5" y2="819" stroke="#dcdcdc" stroke-width="1" />
<line x1="261.5" y1="705" x2="261.5" y2="819" stroke="#dcdcdc" stroke-width="1" />
<line x1="287.5" y1="705" x2="287.5" y2="819" stroke="#dcdcdc" stroke-width="1" />
<line x1="313.5" y1="705" x2="313.5" y2="819" stroke="#dcdcdc" stroke-width="1" />
<line x1="338.5" y1="705" x2="338.5" y2="819" stroke="#dcdcdc" stroke-width="1" />
<line x1="222" y1="726.5" x2="350" y2="726.5" stroke="#dcdcdc" stroke-width="1" />
<line x1="222" y1="752.5" x2="350" y2="752.5" stroke="#dcdcdc" stroke-width="1" />
<line x1="222" y1="778.5" x2="350" y2="778.5" stroke="#dcdcdc" stroke-width="1" />
<line x1="222" y1="804.5" x2="350" y2="804.5" stroke="#dcdcdc" stroke-width="1" />
<line x1="362" y1="709" x2="505" y2="709" stroke="#a9a9a9" stroke-width="2" />
<line x1="362" y1="706" x2="511" y2="706" stroke="#c8c8c8" stroke-width="1" />
<line x1="368.5" y1="710" x2="368.5" y2="819" stroke="#c8c8c8" stroke-width="1" />
<line x1="381.5" y1="710" x2="381.5" y2="819" stroke="#c8c8c8" stroke-width="1" />
<line x1="394.5" y1="710" x2="394.5" y2="819" stroke="#c8c8c8" stroke-width="1" />
<line x1="407.5" y1="710" x2="407.5" y2="819" stroke="#c8c8c8" stroke-width="1" />
<line x1="420.5" y1="710" x2="420.5" y2="819" stroke="#c8c8c8" stroke-width="1" />
<line x1="433.5" y1="710" x2="433.5" y2="819" stroke="#c8c8c8" stroke-width="1" />
<line x1="446.5" y1="710" x2="446.5" y2="819" stroke="#c8c8c8" stroke-width="1" />
<line x1="459.5" y1="710" x2="459.5" y2="819" stroke="#c8c8c8" stroke-width="1" />
<line x1="472.5" y1="710" x2="472.5" y2="819" stroke="#c8c8c8" stroke-width="1" />
<line x1="485.5" y1="710" x2="485.5" y2="819" stroke="#c8c8c8" stroke-width="1" />
<line x1="498.5" y1="710" x2="498.5" y2="819" stroke="#c8c8c8" stroke-width="1" />
<text x="277" y="812" font-size="13" fill="#a8a8a8" font-weight="bold" letter-spacing="0.3" text-anchor="start">SAS Entrée 2</text>
<text x="277" y="827" font-size="12" fill="#c4c4c4" transform="translate(277,827) scale(0.85,1) translate(-277,-827)" text-anchor="start">S: 16.87 m²</text>
<text x="136" y="825" font-size="11" fill="#000" transform="rotate(-54 136 825)" text-anchor="start">Ø250 mm</text>
<rect x="17.5" y="779" width="80" height="9" stroke="#a9a9a9" stroke-width="2" fill="none" />
<path d="M0 774.5H11Q15 774.5 15 778.5V788" stroke="#1a30d0" stroke-width="3" fill="none" />
<rect x="8" y="778" width="6" height="10" stroke="#a9a9a9" stroke-width="1" fill="#fff" />
<line x1="20.5" y1="788" x2="20.5" y2="819" stroke="#a9a9a9" stroke-width="2" />
<line x1="24.5" y1="788" x2="24.5" y2="819" stroke="#a9a9a9" stroke-width="1" />
<path d="M86 788V819 M86 792H122 L120 802L110 812L100 815" stroke="#a9a9a9" stroke-width="1" fill="none" />
<line x1="94" y1="800" x2="94" y2="819" stroke="#a8d0a8" stroke-width="1" />
<line x1="80" y1="784" x2="90" y2="792" stroke="#a9a9a9" stroke-width="0.8" />
<path d="M511 687L504 691L511 695" stroke="#e89090" stroke-width="1.6" fill="none" />
</svg>
</div>
<div class="abs" style="left:498px;top:52px;width:13px;height:767px;background:linear-gradient(90deg,rgba(0,0,0,0),rgba(0,0,0,0.09))"></div>
<div id="panel" class="abs">
<div class="abs" style="left:0;top:0;width:1px;height:819px;background:#dcdcdc"></div>
<div class="abs" style="left:6px;top:0;width:70px;height:13px;border:1px solid #dcdcdc;border-top:0"></div>
<div class="abs" style="left:9px;top:0;width:65px;height:11px;border:1px solid #d0d0d0;border-top:0;background:#e8e8e8"></div>
<div class="abs" style="left:6px;top:15px;width:466px;height:23px;border:1px solid #a0a0a0;background:#e1e1e1"></div>
<div class="abs" style="left:10px;top:19px;line-height:16px;letter-spacing:-0.4px">Espaces (1)</div>
<div class="abs" style="left:499px;top:18px;line-height:16px;color:#8a949c;white-space:nowrap">Modifier le type</div>
<svg class="abs" style="left:455px;top:14px" width="44" height="24" viewBox="966 14 44 24">
<path d="M970.2 24.6L974 28.4L977.8 24.6" stroke="#333" stroke-width="1.3" fill="none"/>
<path d="M990 20.5V17.5H996 M997.5 17.5H1002.5V21 M990 23.5V26 M990 28V32H996 M995.5 22.5H990" stroke="#777" stroke-width="1.1" fill="none"/>
<rect x="997.5" y="23.5" width="7" height="9" fill="#f4f4f4" stroke="#777" stroke-width="1.1"/>
<path d="M999 25.5H1003 M999 29.5H1003 M1001.5 28L1003 29.5L1001.5 31" stroke="#777" stroke-width="1" fill="none"/>
</svg>

<div class="abs" style="left:0;top:13px;width:537px;height:1px;background:#dadada"></div>
<div class="hd" style="top:39px">Contraintes</div>
<div class="rw g" style="top:57px"><span class="k">Niveau</span><span class="v">Niveau 1 - Projet</span></div>
<div class="rw" style="top:75px"><span class="k">Limite supérieure</span><span class="v ed">Niveau 1 - Projet</span></div>
<div class="rw" style="top:93px"><span class="k">Décalage limite</span><span class="v">3.1000 m</span></div>
<div class="rw" style="top:111px"><span class="k">Décalage inférieur</span><span class="v">0.0000 m</span></div>
<div class="hd" style="top:129px">Electricité - Eclairage</div>
<div class="rw g" style="top:147px"><span class="k">Moyenne estimée d&#x27;illumination</span><span class="v">0.00 lx</span></div>
<div class="rw g" style="top:165px"><span class="k">Rapport de cavité de pièce</span><span class="v">0.000000</span></div>
<div class="rw" style="top:183px"><span class="k">Plan de construction du calcul de l&#x27;éclairage</span><span class="v">0.7620 m</span></div>
<div class="rw g" style="top:201px"><span class="k">Plan de luminaire du calcul de l&#x27;éclairage</span><span class="v">Non calculé</span></div>
<div class="rw" style="top:219px"><span class="k">Réflectivité des plafonds</span><span class="v">75.0000%</span></div>
<div class="rw" style="top:237px"><span class="k">Réflexion des murs</span><span class="v">50.0000%</span></div>
<div class="rw" style="top:255px"><span class="k">Réflectivité des sols</span><span class="v">20.0000%</span></div>
<div class="hd" style="top:273px">Electricité - Charges</div>
<div class="rw" style="top:291px"><span class="k">Charges de chauffage, de ventilation et d&#x27;air con...</span><span class="v">0.00 W/m<sup>2</sup></span></div>
<div class="rw" style="top:309px"><span class="k">Autre charge de conception par surface</span><span class="v">0.00 W/m<sup>2</sup></span></div>
<div class="hd" style="top:327px">Cotes</div>
<div class="rw g" style="top:345px"><span class="k">Surface</span><span class="v">Espace superflu</span></div>
<div class="rw g" style="top:363px"><span class="k">Périmètre</span><span class="v">Espace superflu</span></div>
<div class="rw g" style="top:381px"><span class="k">Hauteur non liée</span><span class="v">3.1000 m</span></div>
<div class="rw g" style="top:399px"><span class="k">Volume</span><span class="v">Espace superflu</span></div>
<div class="rw g" style="top:417px"><span class="k">Hauteur de calcul</span><span class="v">0.0000 m</span></div>
<div class="hd" style="top:435px">Génie climatique</div>
<div class="rw" style="top:453px"><span class="k">EG-CVC_Num CTA</span><span class="v"></span></div>
<div class="hd" style="top:471px">Génie climatique - Débit</div>
<div class="rw" style="top:489px"><span class="k">Ecoulement de soufflage spécifié</span><span class="v">0.0000 m<sup>3</sup>/h</span></div>
<div class="rw g" style="top:507px"><span class="k">Ecoulement de soufflage calculé</span><span class="v">Non calculé</span></div>
<div class="rw g" style="top:525px"><span class="k">Ecoulement de soufflage réel</span><span class="v">0.0000 m<sup>3</sup>/h</span></div>
<div class="rw" style="top:543px"><span class="k">Débit de reprise</span><span class="v">Spécifié</span></div>
<div class="rw" style="top:561px"><span class="k">Débit d&#x27;air de retour spécifié</span><span class="v">0.0000 m<sup>3</sup>/h</span></div>
<div class="rw g" style="top:579px"><span class="k">Débit d&#x27;air de retour réel</span><span class="v">0.0000 m<sup>3</sup>/h</span></div>
<div class="rw" style="top:597px"><span class="k">Evacuation du débit d&#x27;air spécifié</span><span class="v">0.0000 m<sup>3</sup>/h</span></div>
<div class="rw g" style="top:615px"><span class="k">Débit d&#x27;air évacué réel</span><span class="v">0.0000 m<sup>3</sup>/h</span></div>
<div class="rw g" style="top:633px"><span class="k">Ecoulement d&#x27;air extérieur</span><span class="v">0.0000 m<sup>3</sup>/h</span></div>
<div class="hd" style="top:651px">Données d&#x27;identification</div>
<div class="rw" style="top:669px"><span class="k">Sous-projet</span><span class="v">PLB-Réseaux Evacuations</span></div>
<div class="rw" style="top:687px"><span class="k">Numéro</span><span class="v">232</span></div>
<div class="rw" style="top:705px"><span class="k">Nom</span><span class="v">Espace</span></div>
<div class="rw g" style="top:723px"><span class="k">Numéro de la pièce</span><span class="v">Non occupé</span></div>
<div class="rw g" style="top:741px"><span class="k">Nom de la pièce</span><span class="v">Non occupé</span></div>
<div class="rw" style="top:759px"><span class="k">Image</span><span class="v"></span></div>
<div class="rw" style="top:777px"><span class="k">Commentaires</span><span class="v"></span></div>
<div class="rw g" style="top:795px"><span class="k">Modifié par</span><span class="v"></span></div>
<div class="hd" style="top:813px">Phases de construction</div></div>
</body></html>
